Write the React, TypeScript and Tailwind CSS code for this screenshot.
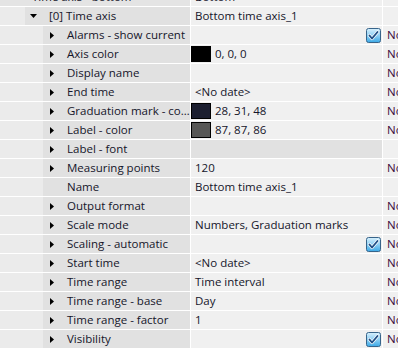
import React from 'react'

type Row = {
  label: string
  value?: string
  swatch?: string
  check?: boolean
  expand?: boolean
  dimValue?: boolean
  noDefault?: boolean
}

const rows: Row[] = [
  { label: 'Alarms - show current', check: true, expand: true, noDefault: true },
  { label: 'Axis color', swatch: '#000000', value: '0, 0, 0', expand: true, noDefault: true },
  { label: 'Display name', expand: true, noDefault: true },
  { label: 'End time', value: '<No date>', expand: true, noDefault: true },
  { label: 'Graduation mark - co\u2026', swatch: '#1c1f30', value: '28, 31, 48', expand: true, noDefault: true },
  { label: 'Label - color', swatch: '#575756', value: '87, 87, 86', expand: true, noDefault: true },
  { label: 'Label - font', expand: true, dimValue: true },
  { label: 'Measuring points', value: '120', expand: true, noDefault: true },
  { label: 'Name', value: 'Bottom time axis_1' },
  { label: 'Output format', expand: true, noDefault: true },
  { label: 'Scale mode', value: 'Numbers, Graduation marks', expand: true, noDefault: true },
  { label: 'Scaling - automatic', check: true, expand: true, noDefault: true },
  { label: 'Start time', value: '<No date>', expand: true, noDefault: true },
  { label: 'Time range', value: 'Time interval', expand: true, noDefault: true },
  { label: 'Time range - base', value: 'Day', expand: true, noDefault: true },
  { label: 'Time range - factor', value: '1', expand: true, noDefault: true },
  { label: 'Visibility', check: true, expand: true, noDefault: true },
]

function Checkbox() {
  return (
    <svg width="15" height="15" viewBox="0 0 15 15">
      <defs>
        <linearGradient id="cbg" x1="0" y1="0" x2="0" y2="1">
          <stop offset="0" stopColor="#d8f0fc" />
          <stop offset="0.5" stopColor="#8fd0f4" />
          <stop offset="1" stopColor="#3aa8e6" />
        </linearGradient>
      </defs>
      <rect x="0.5" y="0.5" width="14" height="14" rx="2" fill="url(#cbg)" stroke="#37648a" />
      <path d="M3.5 7.5 L6 10.5 L11.5 4" fill="none" stroke="#ffffff" strokeWidth="3.2" strokeLinecap="round" strokeLinejoin="round" />
      <path d="M3.5 7.5 L6 10.5 L11.5 4" fill="none" stroke="#1f4f86" strokeWidth="1.9" strokeLinecap="round" strokeLinejoin="round" />
    </svg>
  )
}

function ArrowRight() {
  return (
    <svg width="4" height="7" viewBox="0 0 4 7" className="block">
      <path d="M0 0 L4 3.5 L0 7 Z" fill="#000" />
    </svg>
  )
}

function ArrowDown() {
  return (
    <svg width="7" height="4" viewBox="0 0 7 4" className="block">
      <path d="M0 0 L7 0 L3.5 4 Z" fill="#000" />
    </svg>
  )
}

export default function App() {
  return (
    <div
      className="w-[398px] h-[349px] overflow-hidden bg-white text-[11.5px] text-[#15152a]"
      style={{ fontFamily: '"Open Sans", "Noto Sans", sans-serif' }}
    >
      <div className="flex flex-col gap-px -mt-[12px]">
        {/* partially visible parent row */}
        <div className="flex h-[18px] gap-px">
          <div className="w-[190px] shrink-0 bg-[#e4e4e4] flex items-center pl-[32px] whitespace-nowrap">
            Time axis - bottom
          </div>
          <div className="w-[191px] shrink-0 bg-[#f0f0f0] flex items-center pl-[4px]">Bottom</div>
          <div className="flex-1 bg-[#f0f0f0]" />
        </div>

        {/* [0] Time axis */}
        <div className="flex h-[18px] gap-px">
          <div className="w-[190px] shrink-0 flex">
            <div className="w-[25px] shrink-0 bg-[#ebebeb]" />
            <div className="flex-1 bg-[#e1e1e1] flex items-center">
              <div className="w-[24px] flex justify-start pl-[5px]">
                <ArrowDown />
              </div>
              <span className="whitespace-nowrap">[0] Time axis</span>
            </div>
          </div>
          <div className="w-[191px] shrink-0 bg-[#f0f0f0] flex items-center pl-[4px] whitespace-nowrap">
            Bottom time axis_1
          </div>
          <div className="flex-1 bg-[#f0f0f0]" />
        </div>

        {rows.map((r) => (
          <div key={r.label} className="flex h-[18px] gap-px">
            <div className="w-[190px] shrink-0 flex">
              <div className="w-[43px] shrink-0 bg-[#ebebeb]" />
              <div className="flex-1 bg-[#e1e1e1] flex items-center overflow-hidden">
                <div className="w-[24px] shrink-0 pl-[7px]">{r.expand && <ArrowRight />}</div>
                <span className="whitespace-nowrap">{r.label}</span>
              </div>
            </div>
            <div
              className={`w-[191px] shrink-0 flex items-center whitespace-nowrap ${
                r.dimValue ? 'bg-[#e1e1e1]' : 'bg-[#f0f0f0]'
              } ${r.swatch ? 'pl-0' : 'pl-[4px]'}`}
            >
              {r.swatch && (
                <div
                  className="w-[20px] h-[16px] border border-black mr-[4px] shrink-0"
                  style={{ backgroundColor: r.swatch }}
                />
              )}
              {r.value}
              {r.check && (
                <div className="ml-auto mr-[1px] flex">
                  <Checkbox />
                </div>
              )}
            </div>
            <div className="flex-1 bg-[#f0f0f0] flex items-center pl-[4px] whitespace-nowrap text-[#3a0a3a]">
              {r.noDefault ? 'No' : ''}
            </div>
          </div>
        ))}
      </div>
    </div>
  )
}
